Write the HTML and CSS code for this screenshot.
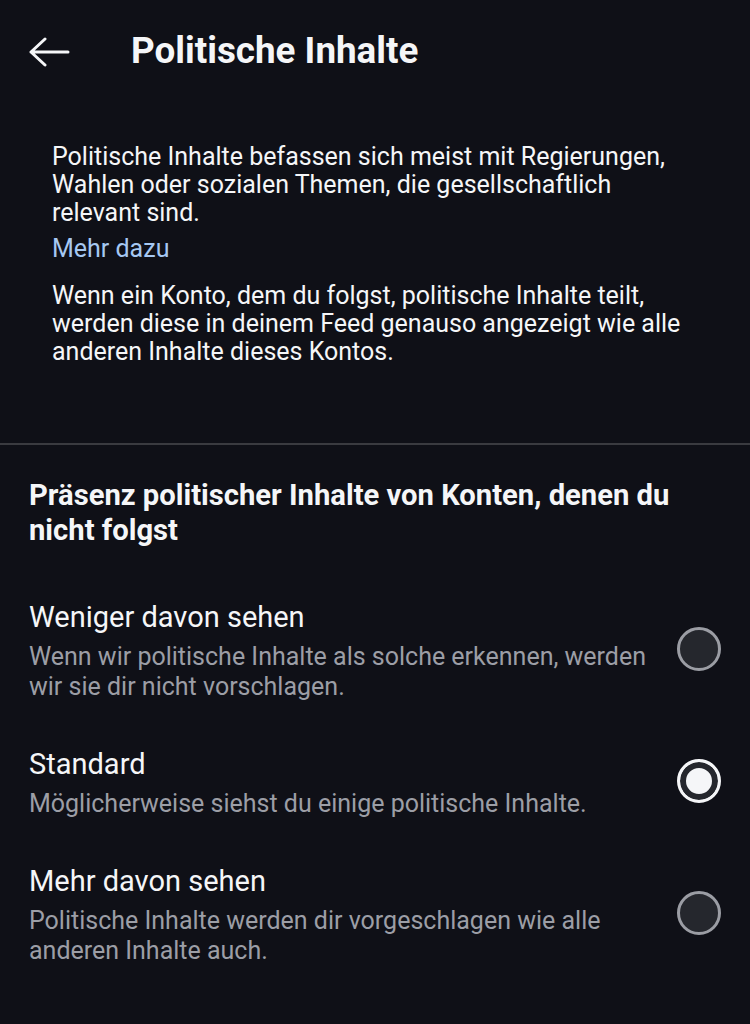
FILE: index.html
```html
<!DOCTYPE html>
<html lang="de">
<head>
    <meta charset="UTF-8">
    <meta name="viewport" content="width=device-width, initial-scale=1.0">
    <title>Politische Inhalte</title>
    <link rel="stylesheet" href="styles.css">
</head>
<body>
    <div class="screen">
        <!-- Top bar -->
        <header class="topbar">
            <button class="back" aria-label="Zurück">
                <svg width="42" height="30" viewBox="0 0 42 30">
                    <path d="M40 15H3M17 2L3 15l14 13" fill="none" stroke="#f5f6f8" stroke-width="3" stroke-linecap="round" stroke-linejoin="round"/>
                </svg>
            </button>
            <h1>Politische Inhalte</h1>
        </header>

        <!-- Intro -->
        <section class="intro">
            <p>Politische Inhalte befassen sich meist mit Regierungen, Wahlen oder sozialen Themen, die gesellschaftlich relevant sind.</p>
            <a href="#" class="more">Mehr dazu</a>
            <p class="second">Wenn ein Konto, dem du folgst, politische Inhalte teilt, werden diese in deinem Feed genauso angezeigt wie alle anderen Inhalte dieses Kontos.</p>
        </section>

        <hr class="divider">

        <!-- Options -->
        <section class="options">
            <h2>Präsenz politischer Inhalte von Konten, denen du nicht folgst</h2>

            <label class="option">
                <div class="option-text">
                    <span class="option-title">Weniger davon sehen</span>
                    <span class="option-sub">Wenn wir politische Inhalte als solche erkennen, werden wir sie dir nicht vorschlagen.</span>
                </div>
                <span class="radio"></span>
            </label>

            <label class="option">
                <div class="option-text">
                    <span class="option-title">Standard</span>
                    <span class="option-sub">Möglicherweise siehst du einige politische Inhalte.</span>
                </div>
                <span class="radio checked"></span>
            </label>

            <label class="option">
                <div class="option-text">
                    <span class="option-title">Mehr davon sehen</span>
                    <span class="option-sub">Politische Inhalte werden dir vorgeschlagen wie alle anderen Inhalte auch.</span>
                </div>
                <span class="radio"></span>
            </label>
        </section>
    </div>
</body>
</html>
```

FILE: styles.css
```css
/* Page */
body {
    background-color: #0f1017;
    color: #f5f6f8;
    font-family: 'Roboto', 'Liberation Sans', sans-serif;
    margin: 0;
    padding: 0;
}

.screen {
    width: 750px;
    min-height: 1024px;
}

/* Top bar */
.topbar {
    display: flex;
    align-items: center;
    height: 100px;
    padding-left: 28px;
}

.back {
    background: none;
    border: none;
    padding: 0;
    width: 42px;
    height: 30px;
    margin-right: 61px;
    margin-top: 3px;
    cursor: pointer;
}

.back svg {
    display: block;
}

.topbar h1 {
    font-size: 36.8px;
    font-weight: 700;
    margin: 0;
}

/* Intro text */
.intro {
    padding: 43px 52px 77px 52px;
}

.intro p {
    font-size: 25px;
    line-height: 28px;
    margin: 0;
}

.intro .more {
    display: block;
    color: #a6c8f2;
    font-size: 25px;
    line-height: 28px;
    margin-top: 8px;
    text-decoration: none;
}

.intro .second {
    margin-top: 19px;
}

.divider {
    border: none;
    height: 2px;
    background: #3a3b40;
    margin: 0;
}

/* Options */
.options {
    padding: 33px 29px 0 29px;
}

.options h2 {
    font-size: 29.2px;
    line-height: 35px;
    font-weight: 700;
    margin: 0 0 52px 0;
    padding-right: 30px;
}

.option {
    display: flex;
    align-items: center;
    justify-content: space-between;
    margin-bottom: 45px;
    cursor: pointer;
}

.option-text {
    display: flex;
    flex-direction: column;
    max-width: 632px;
}

.option-title {
    font-size: 29px;
    line-height: 34px;
}

.option-sub {
    font-size: 25px;
    line-height: 30px;
    color: #9c9ea6;
    margin-top: 8px;
}

/* Radio buttons */
.radio {
    flex: none;
    box-sizing: border-box;
    width: 44px;
    height: 44px;
    border-radius: 50%;
    border: 3px solid #9b9da4;
    background: #25272d;
    margin-top: -4px;
}

.radio.checked {
    border-color: #f5f6f8;
    background: #f5f6f8;
    box-shadow: inset 0 0 0 6px #25272d;
}
```
